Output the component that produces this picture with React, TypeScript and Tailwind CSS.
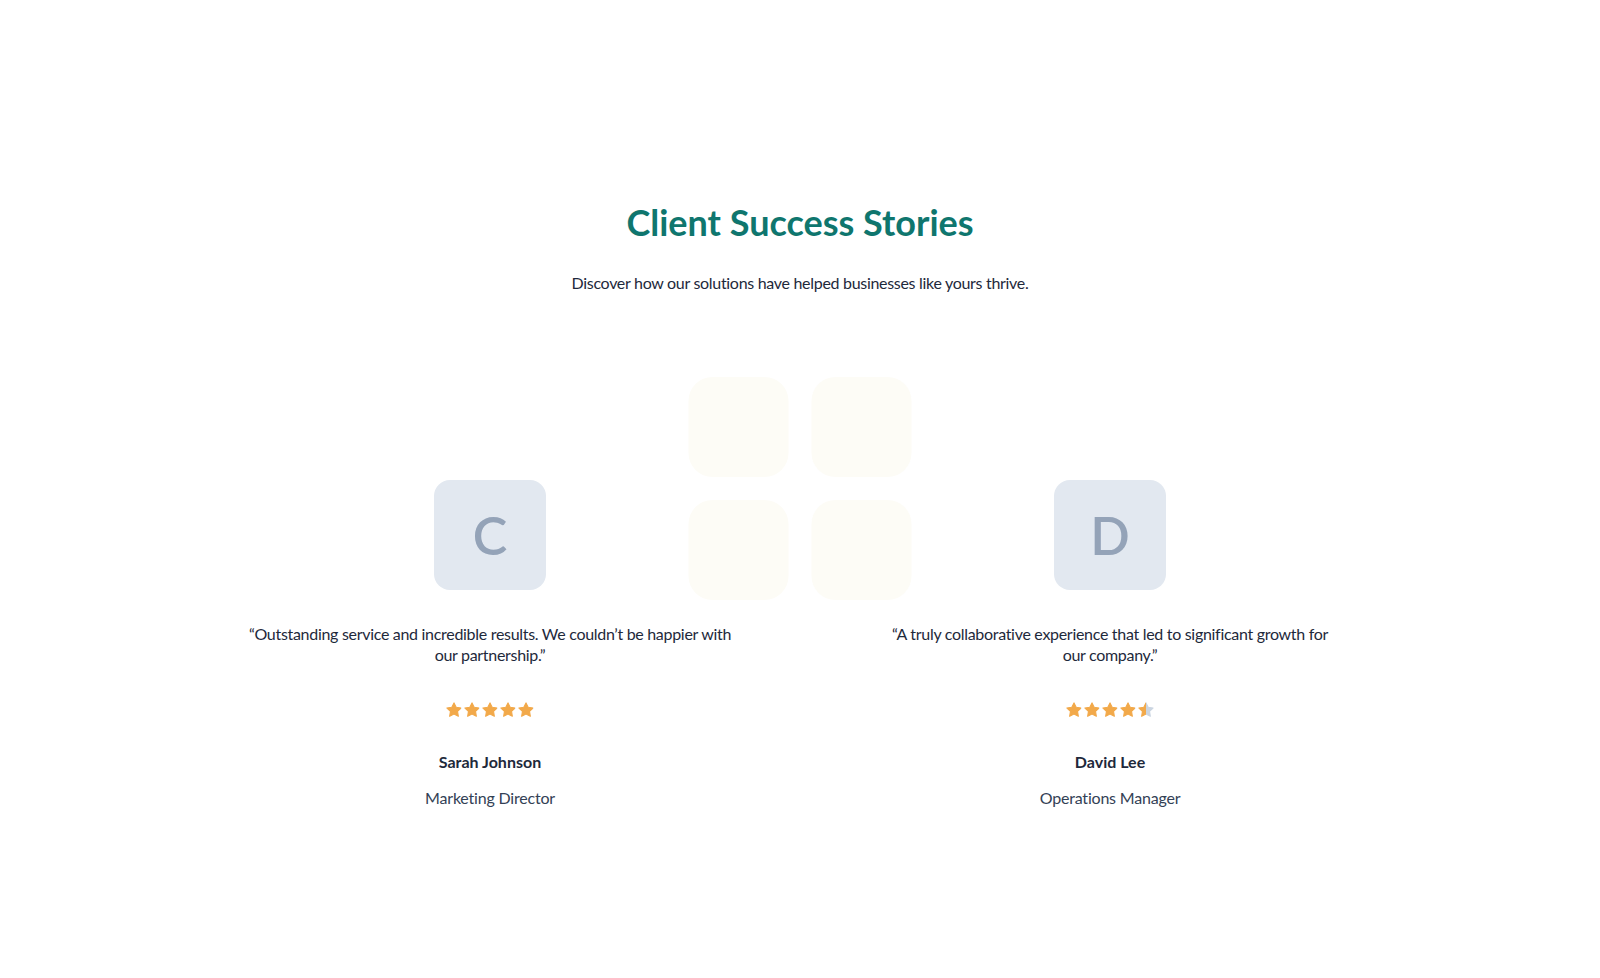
import React from 'react';

type Testimonial = {
  initial: string;
  quote: string;
  rating: number;
  name: string;
  role: string;
  quoteWidth: string;
};

const testimonials: Testimonial[] = [
  {
    initial: 'C',
    quote: '\u201cOutstanding service and incredible results. We couldn\u2019t be happier with our partnership.\u201d',
    rating: 5,
    name: 'Sarah Johnson',
    role: 'Marketing Director',
    quoteWidth: 'max-w-[490px]',
  },
  {
    initial: 'D',
    quote: '\u201cA truly collaborative experience that led to significant growth for our company.\u201d',
    rating: 4.5,
    name: 'David Lee',
    role: 'Operations Manager',
    quoteWidth: 'max-w-[450px]',
  },
];

const STAR = 'M12 2.5l2.9 5.9 6.5.95-4.7 4.58 1.1 6.47L12 17.35l-5.8 3.05 1.1-6.47-4.7-4.58 6.5-.95L12 2.5z';

function Star({ fill, id }: { fill: number; id: string }) {
  return (
    <svg viewBox="0 0 24 24" className="h-[18px] w-[18px]">
      <defs>
        <linearGradient id={id} x1="0" x2="1" y1="0" y2="0">
          <stop offset={fill} stopColor="#f2a94a" />
          <stop offset={fill} stopColor="#cbd5e1" />
        </linearGradient>
      </defs>
      <path d={STAR} fill={`url(#${id})`} stroke={`url(#${id})`} strokeWidth="1.5" strokeLinejoin="round" />
    </svg>
  );
}

function Stars({ rating, prefix }: { rating: number; prefix: string }) {
  return (
    <div className="mt-[36px] flex items-center">
      {[0, 1, 2, 3, 4].map((i) => {
        const fill = Math.max(0, Math.min(1, rating - i));
        return <Star key={i} fill={fill} id={`${prefix}-star-${i}`} />;
      })}
    </div>
  );
}

function TestimonialCard({ t, index }: { t: Testimonial; index: number }) {
  return (
    <div className="flex flex-col items-center text-center">
      <div className="flex h-[110px] w-[112px] items-center justify-center rounded-2xl bg-[#e2e8f0] text-[52px] font-semibold text-[#94a3b8]">
        {t.initial}
      </div>
      <p className={`mt-[33px] ${t.quoteWidth} text-[16px] leading-[21px] tracking-[-0.3px] text-[#1e293b]`}>{t.quote}</p>
      <Stars rating={t.rating} prefix={`t${index}`} />
      <h3 className="mt-[31px] text-[16px] font-bold leading-6 text-[#1e293b]">{t.name}</h3>
      <p className="mt-[12px] text-[16px] leading-6 tracking-[-0.2px] text-[#334155]">{t.role}</p>
    </div>
  );
}

export default function App() {
  return (
    <section className="min-h-screen bg-white pt-[198px] font-['Lato',sans-serif]">
      <div className="text-center">
        <h2 className="text-[36px] font-bold leading-[48px] text-[#0f766e]">Client Success Stories</h2>
        <p className="mt-[25px] text-[16px] leading-6 tracking-[-0.3px] text-[#1e293b]">
          Discover how our solutions have helped businesses like yours thrive.
        </p>
      </div>

      <div className="relative mx-auto mt-[82px] w-[1200px]">
        {/* faint decorative tiles behind the cards */}
        <div className="absolute left-1/2 top-0 grid -translate-x-1/2 grid-cols-2 gap-[23px]">
          <div className="h-[100px] w-[100px] rounded-3xl bg-[#fdfcf6]" />
          <div className="h-[100px] w-[100px] rounded-3xl bg-[#fdfcf6]" />
          <div className="h-[100px] w-[100px] rounded-3xl bg-[#fdfcf6]" />
          <div className="h-[100px] w-[100px] rounded-3xl bg-[#fdfcf6]" />
        </div>

        <div className="relative grid grid-cols-2 gap-10 pt-[103px]">
          {testimonials.map((t, i) => (
            <TestimonialCard key={t.name} t={t} index={i} />
          ))}
        </div>
      </div>
    </section>
  );
}
